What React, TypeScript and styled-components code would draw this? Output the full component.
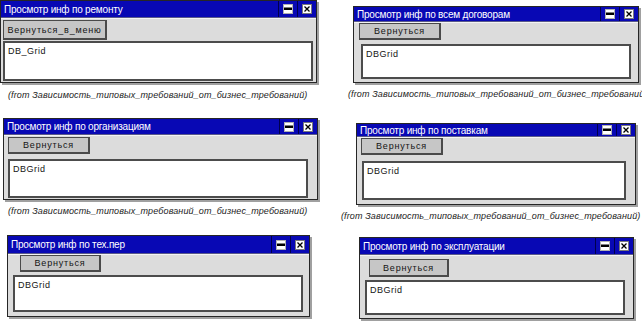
import React from "react";
import styled, { createGlobalStyle } from "styled-components";

const GlobalStyle = createGlobalStyle`
  html, body {
    margin: 0;
    padding: 0;
    background: #ffffff;
  }
  body {
    font-family: "Liberation Sans", Arial, sans-serif;
  }
`;

type Box = { x: number; y: number; w: number; h: number };

type FormSpec = {
  title: string;
  button: string;
  grid: string;
  w: number;
  h: number;
  titleH: number;
  btn: Box;
  tbl: Box;
  caption?: { dx: number; dy: number };
};

type CellSpec = { pl: number; pt: number; form: FormSpec };

const CAPTION =
  "(from Зависимость_типовых_требований_от_бизнес_требований)";

// row origins: 0, 105, 220 ; column origins: 0, 320
const cells: CellSpec[] = [
  {
    pl: 0,
    pt: 0,
    form: {
      title: "Просмотр инф по ремонту",
      button: "Вернуться_в_меню",
      grid: "DB_Grid",
      w: 317,
      h: 83,
      titleH: 16,
      btn: { x: 3, y: 19, w: 104, h: 20 },
      tbl: { x: 3, y: 40, w: 310, h: 40 },
      caption: { dx: 8, dy: 7 },
    },
  },
  {
    pl: 33,
    pt: 6,
    form: {
      title: "Просмотр инф по всем договорам",
      button: "Вернуться",
      grid: "DBGrid",
      w: 286,
      h: 77,
      titleH: 14,
      btn: { x: 6, y: 16, w: 82, h: 17 },
      tbl: { x: 8, y: 37, w: 270, h: 35 },
      caption: { dx: -5, dy: 6 },
    },
  },
  {
    pl: 3,
    pt: 13,
    form: {
      title: "Просмотр инф по организациям",
      button: "Вернуться",
      grid: "DBGrid",
      w: 315,
      h: 82,
      titleH: 15,
      btn: { x: 5, y: 18, w: 82, h: 17 },
      tbl: { x: 5, y: 40, w: 300, h: 39 },
      caption: { dx: 5, dy: 6 },
    },
  },
  {
    pl: 36,
    pt: 18,
    form: {
      title: "Просмотр инф по поставкам",
      button: "Вернуться",
      grid: "DBGrid",
      w: 280,
      h: 82,
      titleH: 12,
      btn: { x: 5, y: 14, w: 82, h: 17 },
      tbl: { x: 6, y: 37, w: 264, h: 39 },
      caption: { dx: -15, dy: 6 },
    },
  },
  {
    pl: 7,
    pt: 15,
    form: {
      title: "Просмотр инф по тех.пер",
      button: "Вернуться",
      grid: "DBGrid",
      w: 303,
      h: 82,
      titleH: 17,
      btn: { x: 13, y: 19, w: 81, h: 17 },
      tbl: { x: 6, y: 39, w: 290, h: 37 },
    },
  },
  {
    pl: 39,
    pt: 17,
    form: {
      title: "Просмотр инф по эксплуатации",
      button: "Вернуться",
      grid: "DBGrid",
      w: 275,
      h: 82,
      titleH: 16,
      btn: { x: 10, y: 21, w: 80, h: 18 },
      tbl: { x: 6, y: 42, w: 260, h: 35 },
    },
  },
];

const Canvas = styled.div`
  width: 642px;
  height: 322px;
  overflow: hidden;
  display: grid;
  grid-template-columns: 320px 322px;
  grid-template-rows: 105px 115px 102px;
  background: #ffffff;
`;

const Cell = styled.div<{ $pl: number; $pt: number }>`
  padding: ${(p) => p.$pt}px 0 0 ${(p) => p.$pl}px;
  overflow: visible;
  min-width: 0;
`;

const Frame = styled.div<{ $w: number; $h: number }>`
  box-sizing: border-box;
  width: ${(p) => p.$w}px;
  height: ${(p) => p.$h}px;
  border: 1px solid #262626;
  background: #dcdcdc;
  box-shadow: 2px 2px 0 #a0a0a0;
  display: flex;
  flex-direction: column;
`;

const TitleBar = styled.div<{ $h: number }>`
  height: ${(p) => p.$h}px;
  flex: none;
  background: #0808b4;
  display: flex;
  align-items: stretch;
  color: #ffffff;
  font-size: 10px;
  border-bottom: 1px solid #5a5a8a;
`;

const TitleText = styled.div`
  flex: 1;
  display: flex;
  align-items: center;
  padding-left: 3px;
  white-space: nowrap;
  overflow: hidden;
  letter-spacing: -0.2px;
`;

const TitleButton = styled.div`
  width: 18px;
  flex: none;
  display: flex;
  align-items: center;
  justify-content: center;
  border-left: 1px solid #00004c;
`;

const Body = styled.div`
  flex: 1;
  display: flex;
  flex-direction: column;
  align-items: flex-start;
  border-top: 1px solid #f4f4f4;
`;

const FormButton = styled.div<{ $box: Box; $top: number }>`
  box-sizing: border-box;
  width: ${(p) => p.$box.w}px;
  height: ${(p) => p.$box.h}px;
  margin-left: ${(p) => p.$box.x - 1}px;
  margin-top: ${(p) => p.$top}px;
  background: #c6c6c6;
  border: 1px solid #4a4a4a;
  border-bottom-width: 2px;
  border-right-width: 2px;
  display: flex;
  align-items: center;
  justify-content: center;
  font-size: 9px;
  letter-spacing: 0.8px;
  color: #141414;
`;

const GridBox = styled.div<{ $box: Box; $top: number }>`
  box-sizing: border-box;
  width: ${(p) => p.$box.w}px;
  height: ${(p) => p.$box.h}px;
  margin-left: ${(p) => p.$box.x - 1}px;
  margin-top: ${(p) => p.$top}px;
  background: #ffffff;
  border: 2px solid #4c4c4c;
  padding: 3px 0 0 3px;
  font-size: 9px;
  letter-spacing: 0.5px;
  color: #141414;
`;

const Caption = styled.div<{ $dx: number; $dy: number }>`
  margin: ${(p) => p.$dy}px 0 0 ${(p) => p.$dx}px;
  font-size: 9px;
  font-style: italic;
  letter-spacing: 0.12px;
  color: #1c1c1c;
  white-space: nowrap;
`;

const RestoreIcon = () => (
  <svg width="10" height="10" viewBox="0 0 10 10">
    <rect x="0.5" y="0.5" width="9" height="9" fill="#ffffff" stroke="#b0b0b0" />
    <rect x="1" y="3.5" width="8" height="2.5" fill="#000000" />
  </svg>
);

const CloseIcon = () => (
  <svg width="10" height="10" viewBox="0 0 10 10">
    <rect x="0.5" y="0.5" width="9" height="9" fill="#ffffff" stroke="#7a7a7a" />
    <path d="M2.5 2.5 L7.5 7.5 M7.5 2.5 L2.5 7.5" stroke="#000000" strokeWidth="1.3" />
  </svg>
);

const Form = ({ spec }: { spec: FormSpec }) => {
  const bodyTop = spec.titleH + 1;
  return (
    <>
      <Frame $w={spec.w} $h={spec.h}>
        <TitleBar $h={spec.titleH}>
          <TitleText>{spec.title}</TitleText>
          <TitleButton>
            <RestoreIcon />
          </TitleButton>
          <TitleButton>
            <CloseIcon />
          </TitleButton>
        </TitleBar>
        <Body>
          <FormButton $box={spec.btn} $top={spec.btn.y - bodyTop - 1}>
            {spec.button}
          </FormButton>
          <GridBox $box={spec.tbl} $top={spec.tbl.y - spec.btn.y - spec.btn.h}>
            {spec.grid}
          </GridBox>
        </Body>
      </Frame>
      {spec.caption && (
        <Caption $dx={spec.caption.dx} $dy={spec.caption.dy}>
          {CAPTION}
        </Caption>
      )}
    </>
  );
};

export default function App() {
  return (
    <>
      <GlobalStyle />
      <Canvas>
        {cells.map((c, i) => (
          <Cell key={i} $pl={c.pl} $pt={c.pt}>
            <Form spec={c.form} />
          </Cell>
        ))}
      </Canvas>
    </>
  );
}
